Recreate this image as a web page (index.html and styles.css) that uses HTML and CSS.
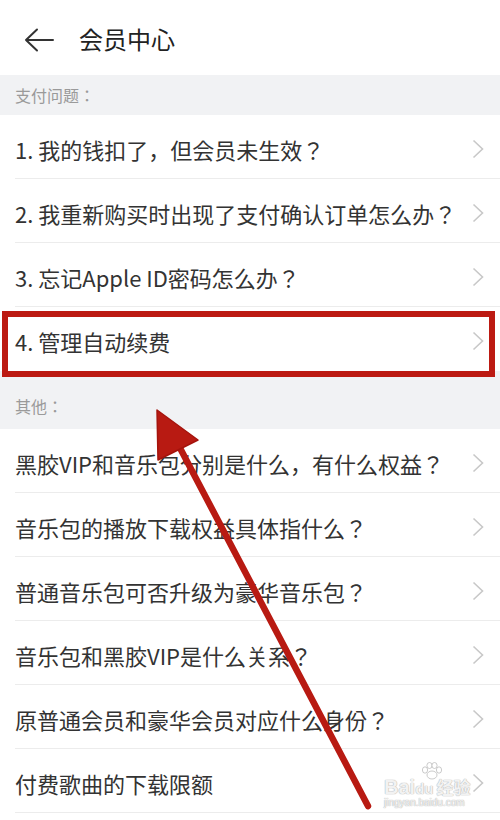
FILE: index.html
```html
<!DOCTYPE html>
<html lang="zh">
<head>
    <meta charset="UTF-8">
    <meta name="viewport" content="width=device-width, initial-scale=1.0">
    <title>会员中心</title>
    <link rel="stylesheet" href="styles.css">
</head>
<body>
    <div id="page">
        <div class="header">
            <svg class="back" width="30" height="24" viewBox="0 0 30 24">
                <path d="M2 12 H29 M13 1.5 L2 12 L13 22.5" fill="none" stroke="#333" stroke-width="2" stroke-linecap="round" stroke-linejoin="round"/>
            </svg>
            <span class="title">会员中心</span>
        </div>

        <div class="section first">支付问题：</div>
        <div class="item"><span>1. 我的钱扣了，但会员未生效？</span><svg class="chev" width="12" height="20" viewBox="0 0 12 20"><polyline points="1.5,1.5 10.5,10 1.5,18.5" fill="none" stroke="#c8c8c8" stroke-width="1.6"/></svg></div>
        <div class="item"><span>2. 我重新购买时出现了支付确认订单怎么办？</span><svg class="chev" width="12" height="20" viewBox="0 0 12 20"><polyline points="1.5,1.5 10.5,10 1.5,18.5" fill="none" stroke="#c8c8c8" stroke-width="1.6"/></svg></div>
        <div class="item"><span>3. 忘记Apple ID密码怎么办？</span><svg class="chev" width="12" height="20" viewBox="0 0 12 20"><polyline points="1.5,1.5 10.5,10 1.5,18.5" fill="none" stroke="#c8c8c8" stroke-width="1.6"/></svg></div>
        <div class="item marked"><span>4. 管理自动续费</span><svg class="chev" width="12" height="20" viewBox="0 0 12 20"><polyline points="1.5,1.5 10.5,10 1.5,18.5" fill="none" stroke="#c8c8c8" stroke-width="1.6"/></svg><div class="redbox"></div></div>

        <div class="section second">其他：</div>
        <div class="item"><span>黑胶VIP和音乐包分别是什么，有什么权益？</span><svg class="chev" width="12" height="20" viewBox="0 0 12 20"><polyline points="1.5,1.5 10.5,10 1.5,18.5" fill="none" stroke="#c8c8c8" stroke-width="1.6"/></svg></div>
        <div class="item"><span>音乐包的播放下载权益具体指什么？</span><svg class="chev" width="12" height="20" viewBox="0 0 12 20"><polyline points="1.5,1.5 10.5,10 1.5,18.5" fill="none" stroke="#c8c8c8" stroke-width="1.6"/></svg></div>
        <div class="item"><span>普通音乐包可否升级为豪华音乐包？</span><svg class="chev" width="12" height="20" viewBox="0 0 12 20"><polyline points="1.5,1.5 10.5,10 1.5,18.5" fill="none" stroke="#c8c8c8" stroke-width="1.6"/></svg></div>
        <div class="item"><span>音乐包和黑胶VIP是什么关系？</span><svg class="chev" width="12" height="20" viewBox="0 0 12 20"><polyline points="1.5,1.5 10.5,10 1.5,18.5" fill="none" stroke="#c8c8c8" stroke-width="1.6"/></svg></div>
        <div class="item"><span>原普通会员和豪华会员对应什么身份？</span><svg class="chev" width="12" height="20" viewBox="0 0 12 20"><polyline points="1.5,1.5 10.5,10 1.5,18.5" fill="none" stroke="#c8c8c8" stroke-width="1.6"/></svg></div>
        <div class="item"><span>付费歌曲的下载限额</span><svg class="chev" width="12" height="20" viewBox="0 0 12 20"><polyline points="1.5,1.5 10.5,10 1.5,18.5" fill="none" stroke="#c8c8c8" stroke-width="1.6"/></svg></div>
        <div class="item"><span></span></div>

        <!-- annotation arrow -->
        <svg class="arrow" width="500" height="820" viewBox="0 0 500 820">
            <line x1="368" y1="806" x2="180" y2="448" stroke="#b81a12" stroke-width="6.5" stroke-linecap="round"/>
            <polygon points="157,410 198,440 158,460" fill="#b81a12" stroke="#a5140d" stroke-width="1.5" stroke-linejoin="round"/>
        </svg>

        <div class="watermark">
            <svg class="wm-paw" width="22" height="18" viewBox="0 0 22 18">
                <g fill="rgba(255,255,255,0.8)" stroke="#bdbdbd" stroke-width="0.8">
                    <ellipse cx="4" cy="8" rx="2.6" ry="3.2"/>
                    <ellipse cx="8.5" cy="3.5" rx="2.6" ry="3"/>
                    <ellipse cx="13.5" cy="3.5" rx="2.6" ry="3"/>
                    <ellipse cx="18" cy="8" rx="2.6" ry="3.2"/>
                    <ellipse cx="11" cy="13" rx="5" ry="4"/>
                </g>
            </svg>
            <div class="wm-logo">Bai<span class="du">du</span><span class="jy">经验</span></div>
            <div class="wm-url">jingyan.baidu.com</div>
        </div>
    </div>
</body>
</html>
```

FILE: styles.css
```css
body {
    margin: 0;
    font-family: "Noto Sans CJK JP", "Noto Sans CJK SC", sans-serif;
    font-feature-settings: "locl" 0;
    background: #fff;
    text-spacing-trim: space-all;
}
#page {
    position: relative;
    width: 500px;
    height: 820px;
    overflow: hidden;
    background: #fff;
}
.header {
    height: 75px;
    display: flex;
    align-items: center;
    padding-left: 24px;
    box-sizing: border-box;
}
.back { margin-top: 4px; }
.title {
    margin-left: 25px;
    font-size: 24px;
    color: #222;
    margin-top: 2px;
}
.section {
    background: #f1f2f4;
    color: #9a9a9a;
    font-size: 16px;
    padding-left: 15px;
    box-sizing: border-box;
    display: flex;
    align-items: center;
}
.section.first { height: 40px; }
.section.second { height: 58px; padding-top: 12px; }
.item {
    position: relative;
    height: 64px;
    margin-left: 15px;
    padding-right: 16px;
    border-bottom: 1px solid #ececec;
    box-sizing: border-box;
    display: flex;
    align-items: center;
    justify-content: space-between;
    font-size: 22px;
    color: #333;
}
.item span { padding-top: 4px; }
.chev { margin-top: 4px; flex-shrink: 0; }
.marked { border-bottom: none; }
.redbox {
    position: absolute;
    left: -13px;
    right: 5px;
    top: 4px;
    bottom: -6px;
    border: 6px solid #bc1a12;
    pointer-events: none;
}
.arrow {
    position: absolute;
    left: 0;
    top: 0;
    pointer-events: none;
}
.watermark {
    position: absolute;
    left: 384px;
    top: 764px;
    color: rgba(255, 255, 255, 0.85);
    text-shadow: 0 0 1px #b0b0b0, 0 0 1px #b0b0b0;
    font-family: "Liberation Sans", sans-serif;
}
.wm-paw {
    position: absolute;
    left: 37px;
    top: -2px;
}
.wm-logo { font-size: 20px; font-weight: bold; margin-top: 10px; }
.du { font-size: 15px; margin-right: 3px; }
.jy { font-family: "Noto Sans CJK SC", sans-serif; font-size: 17px; }
.wm-url { font-size: 10px; margin-top: -2px; }
```
